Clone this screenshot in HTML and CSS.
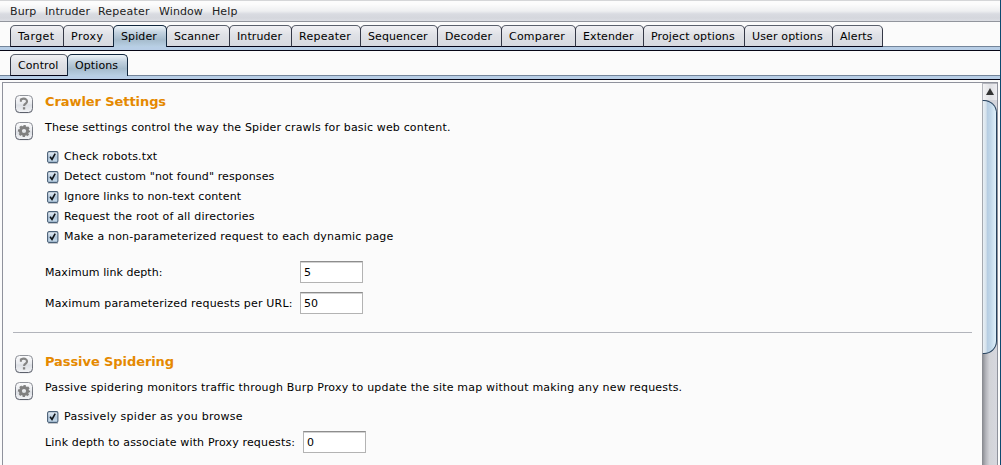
FILE: index.html
```
<!DOCTYPE html>
<html lang="en">
<head>
<meta charset="utf-8">
<title>Spider options</title>
<link rel="stylesheet" href="styles.css">
</head>
<body>
<svg class="defs" width="0" height="0" aria-hidden="true">
  <defs>
    <linearGradient id="btn" x1="0" y1="0" x2="0" y2="1"><stop offset="0" stop-color="#fcfcfd"/><stop offset=".5" stop-color="#e8eaee"/><stop offset=".55" stop-color="#dcdfe4"/><stop offset="1" stop-color="#f4f5f8"/></linearGradient>
    <linearGradient id="edge" x1="0" y1="0" x2="0" y2="1"><stop offset="0" stop-color="#92959c"/><stop offset="1" stop-color="#5c606b"/></linearGradient>
    <linearGradient id="chk" x1="0" y1="0" x2="0" y2="1"><stop offset="0" stop-color="#edf3f9"/><stop offset=".5" stop-color="#b5c9dc"/><stop offset="1" stop-color="#c6dcee"/></linearGradient>
    <symbol id="frame" viewBox="0 0 20 20"><rect x="1.5" y="2" width="17" height="17.3" rx="4" fill="#c5c8cd"/><rect x="1.5" y="1.5" width="17" height="17" rx="4" fill="url(#btn)" stroke="url(#edge)"/></symbol>
    <symbol id="help" viewBox="0 0 20 20"><use href="#frame"/><path d="M6.9 7.7V5.5q3.2-1.7 5.2 0t-.3 4q-1.8 1-1.7 2.5" fill="none" stroke="#858585" stroke-width="2.1"/><rect x="8.9" y="13.2" width="2.3" height="2.3" fill="#858585"/></symbol>
    <symbol id="gear" viewBox="0 0 20 20"><use href="#frame"/><circle cx="10" cy="10" r="3.6" fill="none" stroke="#808080" stroke-width="3"/><circle cx="10" cy="10" r="5.1" fill="none" stroke="#808080" stroke-width="2" stroke-dasharray="2.3 1.705" stroke-dashoffset="1.15"/></symbol>
    <symbol id="check" viewBox="0 0 12 13"><path d="M1 12.3h10" stroke="#b8bbc0" stroke-width="1"/><rect x=".6" y=".6" width="10.3" height="10.8" rx="1.5" fill="url(#chk)" stroke="#4a6077" stroke-width="1.1"/><path d="M3.1 5.7l1.9 2.7L8.2 2.6" fill="none" stroke="#101418" stroke-width="1.6"/></symbol>
  </defs>
</svg>
<div class="window">
  <nav class="menu"><span class="m1">Burp</span><span class="m2">Intruder</span><span class="m3">Repeater</span><span class="m4">Window</span><span>Help</span></nav>
  <div class="tabs main-tabs">
    <span class="tab target">Target</span><span class="tab proxy">Proxy</span><span class="tab spider active">Spider</span><span class="tab scanner">Scanner</span><span class="tab intruder">Intruder</span><span class="tab repeater">Repeater</span><span class="tab sequencer">Sequencer</span><span class="tab decoder">Decoder</span><span class="tab comparer">Comparer</span><span class="tab extender">Extender</span><span class="tab project">Project options</span><span class="tab user">User options</span><span class="tab alerts">Alerts</span>
  </div>
  <div class="strip"></div>
  <div class="tabs sub-tabs"><span class="tab control">Control</span><span class="tab options active">Options</span></div>
  <div class="strip"></div>
  <div class="pane">
    <main class="content">
      <section class="section">
        <div class="icons"><svg><use href="#help"/></svg><svg><use href="#gear"/></svg></div>
        <div class="body">
          <h2>Crawler Settings</h2>
          <p class="t-normal">These settings control the way the Spider crawls for basic web content.</p>
          <div class="checks">
            <label class="t-normal"><svg><use href="#check"/></svg>Check robots.txt</label>
            <label class="t-tight"><svg><use href="#check"/></svg>Detect custom "not found" responses</label>
            <label class="t-tight"><svg><use href="#check"/></svg>Ignore links to non-text content</label>
            <label class="t-wide"><svg><use href="#check"/></svg>Request the root of all directories</label>
            <label class="t-wide"><svg><use href="#check"/></svg>Make a non-parameterized request to each dynamic page</label>
          </div>
          <div class="fields">
            <div class="field"><span class="t-plain">Maximum link depth:</span><div class="input">5</div></div>
            <div class="field"><span class="t-wide">Maximum parameterized requests per URL:</span><div class="input">50</div></div>
          </div>
        </div>
      </section>
      <div class="rule"></div>
      <section class="section">
        <div class="icons"><svg><use href="#help"/></svg><svg><use href="#gear"/></svg></div>
        <div class="body">
          <h2>Passive Spidering</h2>
          <p class="t-wide">Passive spidering monitors traffic through Burp Proxy to update the site map without making any new requests.</p>
          <div class="checks"><label class="t-widest"><svg><use href="#check"/></svg>Passively spider as you browse</label></div>
          <div class="fields passive"><div class="field"><span class="t-normal">Link depth to associate with Proxy requests:</span><div class="input">0</div></div></div>
        </div>
      </section>
    </main>
    <div class="scroll"><div class="up"></div><div class="thumb"></div></div>
  </div>
</div>
</body>
</html>
```
FILE: styles.css
```
* { box-sizing: border-box; }
body { margin: 0; overflow: hidden; font: 11px/14px "DejaVu Sans", sans-serif; color: #000; background: #fbfbfb; }
.defs { display: block; height: 0; }
.window { width: 1001px; height: 465px; border-right: 1px solid #0d4a70; display: flex; flex-direction: column; overflow: hidden; white-space: nowrap; }
.menu { height: 22px; flex: none; display: flex; padding: 4px 0 0 10px; border-top: 1px solid #d5d6d8; border-bottom: 1px solid #92959d; background: linear-gradient(#fcfcfc 15%, #eeeff1 50%, #d9dbe1 65%, #d5d7dd 85%, #dcdee4); color: #222; letter-spacing: .1px; }
.m1 { width: 35px; } .m2 { width: 53px; } .m3 { width: 61px; letter-spacing: .2px; } .m4 { width: 53px; }
.tabs { display: flex; flex: none; padding-left: 10px; background: #fbfbfb; letter-spacing: .1px; }
.main-tabs, .sub-tabs { height: 24px; padding-top: 3px; }
.tab { height: 22px; margin-bottom: -1px; position: relative; padding: 4px 0 0 7px; border: 1px solid #343846; border-top-color: #5a606c; border-bottom-color: #050518; border-radius: 5px 5px 0 0; background: linear-gradient(#f1f1f4, #dfe1e6 45%, #d7d9df); margin-right: -1px; }
.tab.active { z-index: 1; border-color: #12283f; border-bottom: 0; background: linear-gradient(#edf4f9, #c1d1df 32%, #a5bbcc 65%, #b9d0e5); }
.target { width: 54px; letter-spacing: .4px; } .proxy { width: 51px; letter-spacing: .5px; } .spider { width: 54px; } .scanner { width: 64px; } .intruder { width: 63px; } .repeater { width: 70px; letter-spacing: .25px; } .sequencer { width: 78px; } .decoder { width: 65px; letter-spacing: .12px; } .comparer { width: 75px; letter-spacing: .2px; } .extender { width: 69px; } .project { width: 102px; letter-spacing: .14px; } .user { width: 89px; letter-spacing: .14px; } .alerts { width: 51px; }
.control { width: 58px; } .options { width: 61px; }
.strip { height: 5px; flex: none; border-top: 1px solid #74859a; border-bottom: 1px solid #060616; background: #b8cee6; }
.pane { flex: 1; min-height: 0; margin: 2px 2px 0; border: 1px solid #8f929c; border-bottom: 0; display: flex; }
.content { width: 979px; flex: none; overflow: hidden; }
.section { display: flex; padding-left: 11px; }
.icons { width: 31px; padding-top: 11px; display: flex; flex-direction: column; gap: 7px; }
.icons svg { width: 20px; height: 20px; }
h2 { margin: 0; padding-top: 11px; font: bold 13px/16px "DejaVu Sans", sans-serif; letter-spacing: -.08px; color: #e58900; }
p { margin: 11px 0 0; }
.t-plain { letter-spacing: .06px; }
.t-tight { letter-spacing: .11px; }
.t-normal { letter-spacing: .16px; }
.t-wide { letter-spacing: .19px; }
.t-widest { letter-spacing: .28px; }
.checks { padding: 12px 0 0 2px; }
.checks label { display: flex; align-items: center; height: 20px; gap: 5px; }
.checks svg { width: 12px; height: 13px; }
.fields { padding-top: 14px; display: flex; flex-direction: column; gap: 9px; }
.field { display: grid; grid-template-columns: 255px 63px; align-items: center; }
.field span { padding-top: 1px; }
.input { height: 22px; padding: 4px 0 0 3px; line-height: 14px; border: 1px solid #b3b3b3; border-top: 1px solid #8d8d8d; background: #fff; box-shadow: inset 0 1px #d2d2d2; }
.passive { padding-top: 4px; }
.passive .field { grid-template-columns: 258px 63px; }
.rule { height: 1px; margin: 18px 10px 10px 10px; background: #b2b4bb; }
.scroll { width: 15px; flex: none; background: linear-gradient(90deg, #85878d, #b3b4ba 25%, #d2d3d8 50%, #d6d7de); }
.up { height: 17px; border: 1px solid #b4b6bd; border-width: 1px 0 0 1px; background: linear-gradient(90deg, #f3f3f5, #dfe0e4 55%, #ededf1); display: flex; justify-content: center; padding-top: 4px; }
.up::before { content: ""; width: 0; height: 0; border: 4px solid transparent; border-top: 0; border-bottom: 7px solid #333; }
.thumb { width: 15px; height: 254px; border: 1px solid #26425e; border-left-color: #a5a9b0; border-radius: 0 13px 13px 0; background: linear-gradient(90deg, #e8eff5, #d5e1eb 25%, #b6cde2 32%, #c2d8ea 60%, #dff0fa); }
```
